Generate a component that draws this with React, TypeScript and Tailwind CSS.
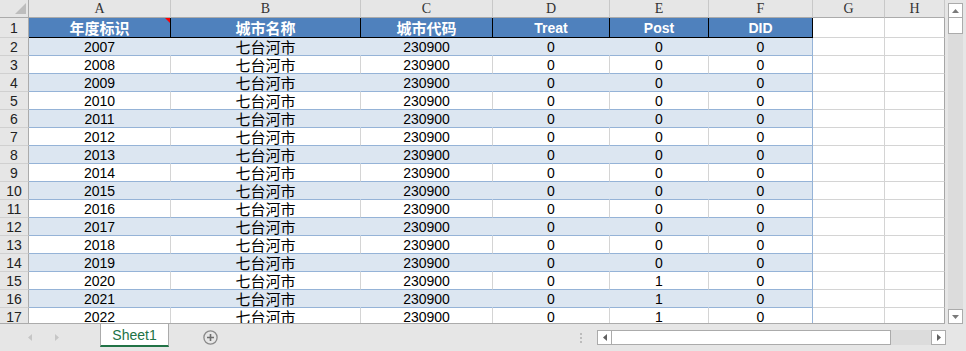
import clsx from "clsx";

const letters = ["A", "B", "C", "D", "E", "F", "G", "H"];
const heads = ["年度标识", "城市名称", "城市代码", "Treat", "Post", "DID"];

const rows = Array.from({ length: 16 }, (_, i) => ({
  n: i + 2,
  year: 2007 + i,
  post: 2007 + i >= 2020 ? 1 : 0,
}));

function Tri({ dir, color }: { dir: "up" | "down" | "left" | "right"; color: string }) {
  const pts = {
    up: "0,4 7,4 3.5,0",
    down: "0,0 7,0 3.5,4",
    left: "4,0 4,7 0,3.5",
    right: "0,0 0,7 4,3.5",
  }[dir];
  const vertical = dir === "up" || dir === "down";
  return (
    <svg width={vertical ? 7 : 4} height={vertical ? 4 : 7} viewBox={vertical ? "0 0 7 4" : "0 0 4 7"}>
      <polygon points={pts} fill={color} />
    </svg>
  );
}

function RowHead({ n, tall }: { n: number; tall?: boolean }) {
  return (
    <div
      className={clsx(
        "flex items-center justify-center border-b border-r border-b-[#d0d0d0] border-r-[#ababab] bg-[#e6e6e6] font-['Liberation_Sans',sans-serif] text-[14px] leading-none text-[#222]",
        tall ? "h-[20px]" : "h-[18px]"
      )}
    >
      {n}
    </div>
  );
}

function DataRow({ n, year, post }: { n: number; year: number; post: number }) {
  const band = n % 2 === 0;
  const vals: (string | number)[] = [year, "七台河市", 230900, 0, post, 0];
  return (
    <>
      <RowHead n={n} />
      {vals.map((v, i) => (
        <div
          key={i}
          className={clsx(
            "flex h-[18px] items-center justify-center border-b border-r border-b-[#95b3d7] leading-none text-black",
            band ? "bg-[#dce6f1]" : "bg-white",
            i === 5 ? "border-r-[#95b3d7]" : band ? "border-r-[#dce6f1]" : "border-r-[#d4d4d4]",
            i === 1
              ? "font-['Noto_Sans_CJK_SC',sans-serif] text-[15px]"
              : "font-['Liberation_Sans',sans-serif] text-[14px]"
          )}
        >
          {v}
        </div>
      ))}
      <div className="h-[18px] border-b border-r border-[#d4d4d4] bg-white" />
      <div className="h-[18px] border-b border-r border-b-[#d4d4d4] border-r-[#a6a6a6] bg-white" />
    </>
  );
}

export default function App() {
  return (
    <div className="flex h-[351px] w-[966px] flex-col overflow-hidden bg-[#e6e6e6]">
      <div className="flex h-[324px]">
        {/* sheet grid */}
        <div className="grid h-[324px] w-[945px] grid-cols-[29px_142px_190px_132px_117px_99px_104px_72px_60px] content-start overflow-hidden border-b border-[#ababab] bg-white">
          <div className="flex h-[18px] items-end justify-end border-b border-r border-[#ababab] bg-[#e6e6e6] pb-[3px] pr-[2px]">
            <svg width="11" height="11" viewBox="0 0 11 11">
              <polygon points="11,0 11,11 0,11" fill="#bdbdbd" />
            </svg>
          </div>
          {letters.map((l) => (
            <div
              key={l}
              className="flex h-[18px] items-center justify-center border-b border-r border-b-[#ababab] border-r-[#c8c8c8] bg-[#e6e6e6] font-['Liberation_Serif',serif] text-[14px] leading-none text-[#333]"
            >
              {l}
            </div>
          ))}

          <RowHead n={1} tall />
          {heads.map((h, i) => (
            <div
              key={h}
              className={clsx(
                "relative flex h-[20px] items-center justify-center border-b border-r border-black bg-[#4f81bd] font-bold leading-none text-white",
                i < 3 ? "font-['Noto_Sans_CJK_SC',sans-serif] text-[15px]" : "font-['Liberation_Sans',sans-serif] text-[14px]"
              )}
            >
              {h}
              {i === 0 && (
                <span className="absolute right-0 top-0 h-0 w-0 border-l-[5px] border-t-[5px] border-l-transparent border-t-[#ff0000]" />
              )}
            </div>
          ))}
          <div className="h-[20px] border-b border-r border-[#d4d4d4] bg-white" />
          <div className="h-[20px] border-b border-r border-b-[#d4d4d4] border-r-[#a6a6a6] bg-white" />

          {rows.map((r) => (
            <DataRow key={r.n} {...r} />
          ))}
        </div>

        {/* vertical scrollbar */}
        <div className="flex w-[21px] flex-col pl-[3px] pr-[3px] pt-[3px]">
          <div className="flex h-[15px] items-center justify-center border border-[#ababab] bg-white">
            <Tri dir="up" color="#7a7a7a" />
          </div>
          <div className="h-[16px] border-x border-b border-[#ababab] bg-white" />
          <div className="flex-1 bg-[#dcdcdc]" />
          <div className="flex h-[15px] items-center justify-center border border-[#ababab] bg-white">
            <Tri dir="down" color="#7a7a7a" />
          </div>
        </div>
      </div>

      {/* sheet tabs bar */}
      <div className="flex h-[27px] items-center">
        <div className="flex w-[100px] items-center gap-[23px] pl-[28px]">
          <Tri dir="left" color="#c6c6c6" />
          <Tri dir="right" color="#c6c6c6" />
        </div>
        <div className="flex h-[23px] w-[69px] items-center justify-center self-start border-x border-b-2 border-x-[#ababab] border-b-[#217346] bg-white font-['Liberation_Sans',sans-serif] text-[14px] leading-none text-[#217346]">
          Sheet1
        </div>
        <div className="ml-[34px] flex h-[15px] w-[15px] items-center justify-center">
          <svg width="15" height="15" viewBox="0 0 15 15">
            <circle cx="7.5" cy="7.5" r="6.6" fill="none" stroke="#8a8a8a" strokeWidth="1.3" />
            <path d="M7.5 4v7M4 7.5h7" stroke="#6e6e6e" strokeWidth="1.6" />
          </svg>
        </div>
        <div className="ml-[362px] flex w-[2px] flex-col gap-[2px]">
          <span className="h-[2px] w-[2px] bg-[#bcbcbc]" />
          <span className="h-[2px] w-[2px] bg-[#bcbcbc]" />
          <span className="h-[2px] w-[2px] bg-[#bcbcbc]" />
        </div>
        <div className="ml-[15px] flex h-[15px] w-[349px]">
          <div className="flex h-[15px] w-[15px] items-center justify-center border border-[#ababab] bg-white">
            <Tri dir="left" color="#606060" />
          </div>
          <div className="h-[15px] w-[279px] border-y border-r border-[#ababab] bg-white" />
          <div className="flex-1 bg-[#dcdcdc]" />
          <div className="flex h-[15px] w-[15px] items-center justify-center border border-[#ababab] bg-white">
            <Tri dir="right" color="#606060" />
          </div>
        </div>
      </div>
    </div>
  );
}
